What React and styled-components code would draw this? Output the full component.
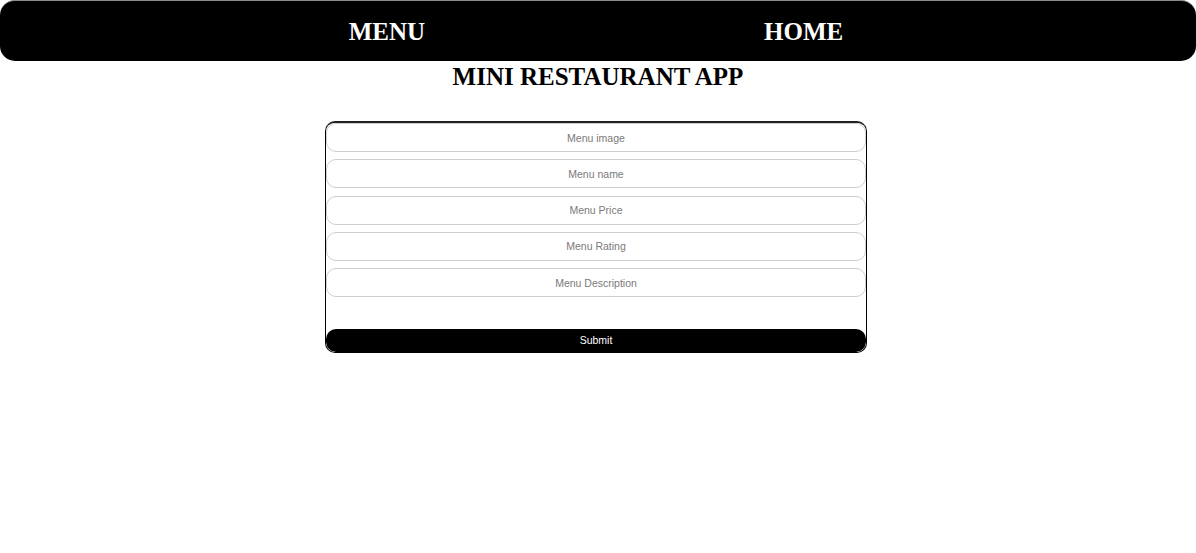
import React from "react";
import styled, { createGlobalStyle } from "styled-components";

const Global = createGlobalStyle`
  html, body { margin: 0; padding: 0; background: #fff; }
  body { font-family: "Liberation Serif", "Times New Roman", serif; }
`;

const Nav = styled.nav`
  height: 61px;
  background: #000;
  border-top: 1px solid #8a8a8a;
  border-radius: 15px;
  box-sizing: border-box;
  display: flex;
  align-items: center;
  justify-content: center;
  gap: 339px;
  padding-right: 4px;
`;

const NavLink = styled.a`
  color: #fff;
  font-family: "Liberation Serif", "Times New Roman", serif;
  font-weight: bold;
  font-size: 25px;
  text-decoration: none;
  line-height: 1;
`;

const Title = styled.h1`
  margin: 1px 0 0;
  text-align: center;
  font-family: "Liberation Serif", "Times New Roman", serif;
  font-weight: bold;
  font-size: 25px;
  line-height: 30px;
  color: #000;
`;

const FormWrap = styled.div`
  display: flex;
  justify-content: center;
  margin-top: 29px;
  padding-right: 4px;
`;

const Form = styled.form`
  width: 542px;
  box-sizing: border-box;
  border: 1px solid #000;
  border-top: 2px solid #222;
  border-radius: 10px;
  display: flex;
  flex-direction: column;
  overflow: hidden;
`;

const Input = styled.input`
  height: 29px;
  box-sizing: border-box;
  border: 1px solid #cfcfcf;
  border-radius: 10px;
  margin-bottom: 7.3px;
  text-align: center;
  font-family: "Liberation Sans", Arial, sans-serif;
  font-size: 10.5px;
  outline: none;
  &::placeholder { color: #7a7a7a; }
`;

const Submit = styled.button`
  margin-top: 24.5px;
  height: 23px;
  background: #000;
  color: #fff;
  border: none;
  border-radius: 10px;
  font-family: "Liberation Sans", Arial, sans-serif;
  font-size: 10.5px;
  padding: 0;
  cursor: pointer;
`;

const fields = ["Menu image", "Menu name", "Menu Price", "Menu Rating", "Menu Description"];

export default function App() {
  return (
    <>
      <Global />
      <Nav>
        <NavLink href="#">MENU</NavLink>
        <NavLink href="#">HOME</NavLink>
      </Nav>
      <Title>MINI RESTAURANT APP</Title>
      <FormWrap>
        <Form onSubmit={(e) => e.preventDefault()}>
          {fields.map((f) => (
            <Input key={f} placeholder={f} />
          ))}
          <Submit type="submit">Submit</Submit>
        </Form>
      </FormWrap>
    </>
  );
}
